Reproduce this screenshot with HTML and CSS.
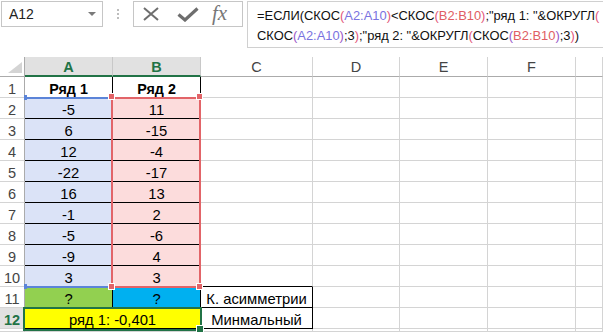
FILE: index.html
```html
<!DOCTYPE html>
<html lang="ru">
<head>
<meta charset="utf-8">
<title>Excel</title>
<link rel="stylesheet" href="styles.css">
</head>
<body>
<div class="toolbar">
  <div class="namebox"><span class="name">A12</span><span class="dd"></span></div>
  <div class="grip"><i></i><i></i><i></i></div>
  <div class="fxbox">
    <svg class="ic-x" width="18" height="14" viewBox="0 0 18 14"><path d="M2 1 L16 13 M16 1 L2 13" stroke="#6e6e6e" stroke-width="2" fill="none"/></svg>
    <svg class="ic-ok" width="22" height="15" viewBox="0 0 22 15"><path d="M1.5 7.5 L8 13 L20.5 1.5" stroke="#6e6e6e" stroke-width="3.2" fill="none"/></svg>
    <span class="fx">fx</span>
  </div>
  <div class="formula">=ЕСЛИ(СКОС<span class="p2">(</span><span class="ra">A2:A10</span><span class="p2">)</span>&lt;СКОС<span class="p2">(</span><span class="rb">B2:B10</span><span class="p2">)</span>;"ряд 1: "&amp;ОКРУГЛ<span class="p2">(</span><br>СКОС<span class="p3">(</span><span class="ra">A2:A10</span><span class="p3">)</span>;3<span class="p2">)</span>;"ряд 2: "&amp;ОКРУГЛ<span class="p2">(</span>СКОС<span class="p3">(</span><span class="rb">B2:B10</span><span class="p3">)</span>;3<span class="p2">)</span>)</div>
</div>

<div class="sheet">
  <div class="c corner"><span class="tri"></span></div>
  <div class="c hd sel">A</div>
  <div class="c hd sel">B</div>
  <div class="c hd">C</div>
  <div class="c hd">D</div>
  <div class="c hd">E</div>
  <div class="c hd">F</div>
  <div class="c hd"></div>

  <div class="c rh">1</div><div class="c t b">Ряд 1</div><div class="c t b">Ряд 2</div><div class="c"></div><div class="c"></div><div class="c"></div><div class="c"></div><div class="c"></div>
  <div class="c rh">2</div><div class="c t fa">-5</div><div class="c t fb">11</div><div class="c"></div><div class="c"></div><div class="c"></div><div class="c"></div><div class="c"></div>
  <div class="c rh">3</div><div class="c t fa">6</div><div class="c t fb">-15</div><div class="c"></div><div class="c"></div><div class="c"></div><div class="c"></div><div class="c"></div>
  <div class="c rh">4</div><div class="c t fa">12</div><div class="c t fb">-4</div><div class="c"></div><div class="c"></div><div class="c"></div><div class="c"></div><div class="c"></div>
  <div class="c rh">5</div><div class="c t fa">-22</div><div class="c t fb">-17</div><div class="c"></div><div class="c"></div><div class="c"></div><div class="c"></div><div class="c"></div>
  <div class="c rh">6</div><div class="c t fa">16</div><div class="c t fb">13</div><div class="c"></div><div class="c"></div><div class="c"></div><div class="c"></div><div class="c"></div>
  <div class="c rh">7</div><div class="c t fa">-1</div><div class="c t fb">2</div><div class="c"></div><div class="c"></div><div class="c"></div><div class="c"></div><div class="c"></div>
  <div class="c rh">8</div><div class="c t fa">-5</div><div class="c t fb">-6</div><div class="c"></div><div class="c"></div><div class="c"></div><div class="c"></div><div class="c"></div>
  <div class="c rh">9</div><div class="c t fa">-9</div><div class="c t fb">4</div><div class="c"></div><div class="c"></div><div class="c"></div><div class="c"></div><div class="c"></div>
  <div class="c rh">10</div><div class="c t fa">3</div><div class="c t fb">3</div><div class="c bt"></div><div class="c"></div><div class="c"></div><div class="c"></div><div class="c"></div>
  <div class="c rh">11</div><div class="c t fg">?</div><div class="c t fc">?</div><div class="c t">К. асимметрии</div><div class="c"></div><div class="c"></div><div class="c"></div><div class="c"></div>
  <div class="c rh sel">12</div><div class="c t fy span2">ряд 1: -0,401</div><div class="c t">Минмальный</div><div class="c"></div><div class="c"></div><div class="c"></div><div class="c"></div>
  <div class="c rh"></div><div class="c"></div><div class="c"></div><div class="c"></div><div class="c"></div><div class="c"></div><div class="c"></div><div class="c"></div>

  <div class="hl-blue top"></div>
  <div class="hl-blue bottom"></div>
  <div class="hb-blue top"></div>
  <div class="hb-blue bottom"></div>
  <div class="hl-red"></div>
  <div class="hr tl"></div>
  <div class="hr tr"></div>
  <div class="hr bl"></div>
  <div class="hr br"></div>
  <div class="selbox"></div>
  <div class="fillh"></div>
</div>
</body>
</html>
```

FILE: styles.css
```css
* { box-sizing: border-box; }
html, body { margin: 0; padding: 0; background: #fff; }
body {
  width: 603px;
  height: 332px;
  overflow: hidden;
  font-family: "Liberation Sans", Arial, sans-serif;
  color: #000;
}

/* ---------- toolbar ---------- */
.toolbar {
  display: flex;
  align-items: flex-start;
  height: 57px;
}
.namebox {
  margin: 1px 0 0 1px;
  width: 102px;
  height: 26px;
  border: 1px solid #c6c6c6;
  display: flex;
  align-items: center;
  justify-content: space-between;
  padding: 0 6px 0 7px;
}
.name { font-size: 14px; color: #222; }
.dd {
  width: 0; height: 0;
  border-left: 4px solid transparent;
  border-right: 4px solid transparent;
  border-top: 4px solid #7a7a7a;
}
.grip {
  width: 30px;
  padding: 9px 0 0 14px;
  display: flex;
  flex-direction: column;
  gap: 2px;
}
.grip i { display: block; width: 2px; height: 2px; background: #bdbdbd; }
.fxbox {
  margin-top: 1px;
  width: 110px;
  height: 26px;
  border: 1px solid #c6c6c6;
  display: flex;
  align-items: center;
  padding-left: 8px;
}
.ic-ok { margin-left: 17px; margin-top: 1px; }
.fx {
  margin-left: 13px;
  font-family: "Liberation Serif", "DejaVu Serif", serif;
  font-style: italic;
  font-size: 21px;
  color: #777;
  line-height: 1;
  margin-top: -2px;
}
.formula {
  margin: 1px 0 0 4px;
  flex: 1;
  height: 47px;
  border: 1px solid #d0d0d0;
  border-right: none;
  padding: 4px 0 0 9px;
  font-size: 12.9px;
  line-height: 20px;
  white-space: nowrap;
  color: #111;
}
.ra { color: #7a72e0; }
.rb { color: #e05d63; }
.p2 { color: #e2577b; }
.p3 { color: #9a58c8; }

/* ---------- sheet ---------- */
.sheet {
  position: relative;
  display: grid;
  grid-template-columns: 25px 88px 88px 112px 87px 88px 88px 1fr;
  grid-template-rows: 20px repeat(12, 21px) 3px;
}
.c {
  border-right: 1px solid #d4d4d4;
  border-bottom: 1px solid #d4d4d4;
  display: flex;
  align-items: flex-end;
  justify-content: center;
  font-size: 14.8px;
  white-space: nowrap;
  overflow: hidden;
}
.corner {
  border-right-color: #ababab;
  border-bottom-color: #ababab;
  justify-content: flex-end;
  padding: 0 2px 3px 0;
}
.tri {
  width: 0; height: 0;
  border-left: 14px solid transparent;
  border-bottom: 11px solid #d4d4d4;
}
.hd {
  align-items: center;
  color: #444;
  font-size: 14.5px;
  border-bottom-color: #ababab;
}
.hd.sel {
  background: #e1e1e1;
  color: #217346;
  font-weight: bold;
  border-right-color: #c8c8c8;
  border-bottom: 2px solid #217346;
  padding-top: 1px;
}
.rh {
  color: #444;
  font-size: 14.5px;
  border-right-color: #ababab;
  border-bottom-color: #d4d4d4;
}
.rh.sel {
  background: #e1e1e1;
  color: #217346;
  font-weight: bold;
}
.t { border-right-color: #000; border-bottom-color: #000; }
.bt { border-bottom-color: #000; }
.b { font-weight: bold; font-size: 14.3px; }
.fa { background: #dbe3f7; }
.fb { background: #fcdcdc; }
.fg { background: #92d050; }
.fc { background: #00b0f0; }
.fy { background: #ffff00; }
.span2 { grid-column: span 2; }

/* ---------- overlays (range highlights, selection) ---------- */
.hl-blue {
  position: absolute;
  left: 25px;
  width: 87px;
  height: 2px;
  background: #5b84d8;
}
.hl-blue.top { top: 40px; }
.hl-blue.bottom { top: 229px; }
.hb-blue {
  position: absolute;
  left: 24px;
  width: 3px;
  height: 5px;
  background: #5b84d8;
}
.hb-blue.top { top: 38px; }
.hb-blue.bottom { top: 227px; }
.hl-red {
  position: absolute;
  left: 111px;
  top: 40px;
  width: 90px;
  height: 191px;
  border: 2px solid #e26468;
}
.hr {
  position: absolute;
  width: 7px;
  height: 7px;
  background: #e26468;
  border: 1px solid #fff;
}
.hr.tl { left: 108px; top: 36px; }
.hr.tr { left: 196px; top: 36px; }
.hr.bl { left: 108px; top: 226px; }
.hr.br { left: 196px; top: 226px; }
.selbox {
  position: absolute;
  left: 23px;
  top: 250px;
  width: 179px;
  height: 24px;
  border: 2px solid #217346;
}
.fillh {
  position: absolute;
  left: 196px;
  top: 268px;
  width: 8px;
  height: 8px;
  background: #217346;
  border: 1px solid #fff;
}
```
